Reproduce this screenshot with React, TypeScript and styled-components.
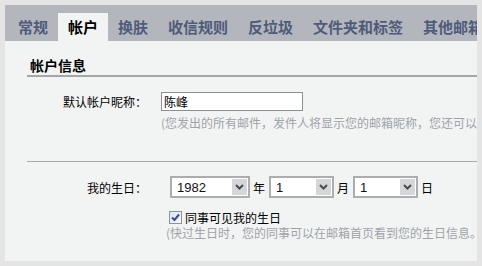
import { createGlobalStyle, styled } from "styled-components";

const GlobalStyle = createGlobalStyle`
  html, body {
    margin: 0;
    padding: 0;
    background: #e4e4e4;
  }
  * {
    box-sizing: border-box;
  }
`;

const Frame = styled.div`
  width: 482px;
  height: 266px;
  padding: 5px;
  background: #e4e4e4;
  font-family: "Noto Sans CJK SC", "Liberation Sans", sans-serif;
`;

const Panel = styled.div`
  height: 100%;
  background: #f2f4f3;
  overflow: hidden;
  display: flex;
  flex-direction: column;
`;

const TabBar = styled.div`
  height: 36px;
  flex: none;
  display: flex;
  align-items: flex-end;
  padding-left: 3px;
  background: #b3b6bc;
  white-space: nowrap;
`;

const Tab = styled.div<{ $active?: boolean }>`
  height: 28px;
  line-height: 28px;
  padding: 0 10px;
  font-size: 15px;
  font-weight: 700;
  color: ${({ $active }) => ($active ? "#000" : "#4f5b7a")};
  background: ${({ $active }) => ($active ? "#f2f4f3" : "transparent")};
  cursor: pointer;
`;

const Section = styled.div`
  margin-left: 22px;
`;

const SectionTitle = styled.div`
  margin-top: 14px;
  height: 22px;
  line-height: 20px;
  padding-left: 3px;
  font-size: 14px;
  font-weight: 700;
  color: #000;
  border-bottom: 2px solid #a6a6a6;
`;

const FormRow = styled.div<{ $top: number }>`
  display: grid;
  grid-template-columns: 120px 1fr;
  column-gap: 14px;
  align-items: center;
  margin-top: ${({ $top }) => $top}px;
  font-size: 12px;
`;

const Label = styled.div`
  text-align: right;
  color: #000;
  white-space: nowrap;
`;

const Field = styled.div<{ $indent?: number }>`
  padding-left: ${({ $indent }) => $indent ?? 0}px;
  white-space: nowrap;
`;

const TextInput = styled.input`
  width: 142px;
  height: 19px;
  padding: 0 2px;
  border: 1px solid #8a8f96;
  background: #fff;
  font-family: "Noto Sans CJK SC", sans-serif;
  font-size: 12px;
  color: #000;
  outline: none;
`;

const Hint = styled.div<{ $indent?: number; $top?: number }>`
  margin-left: ${({ $indent }) => 134 + ($indent ?? 0)}px;
  margin-top: ${({ $top }) => $top ?? 0}px;
  height: 16px;
  line-height: 16px;
  font-size: 12px;
  color: #9ea3aa;
  white-space: nowrap;
`;

const Divider = styled.div`
  margin-top: 30px;
  height: 1px;
  background: #a9a9a9;
`;

const DateLine = styled.div`
  display: flex;
  align-items: center;
  gap: 3px;
  color: #000;
`;

const SelectBox = styled.div<{ $w: number }>`
  width: ${({ $w }) => $w}px;
  height: 22px;
  display: flex;
  align-items: stretch;
  border: 2px solid #adadad;
  background: #fff;
  &:first-child {
    margin-left: 4px;
  }
`;

const NativeSelect = styled.select`
  flex: 1;
  min-width: 0;
  appearance: none;
  border: none;
  outline: none;
  background: transparent;
  padding: 0 0 0 5px;
  font-family: "Liberation Sans", Arial, sans-serif;
  font-size: 13px;
  color: #111;
`;

const Arrow = styled.span`
  width: 15px;
  margin: 1px 1px 1px 0;
  display: flex;
  align-items: center;
  justify-content: center;
  background: #d5d6da;
  pointer-events: none;
`;

const Unit = styled.span`
  font-size: 12px;
  margin-right: 1px;
`;

const CheckRow = styled.label`
  display: flex;
  align-items: center;
  gap: 3px;
  margin-top: 11px;
  margin-left: 142px;
  height: 16px;
  font-size: 12px;
  color: #000;
  white-space: nowrap;
  cursor: pointer;
`;

const HiddenCheck = styled.input`
  position: absolute;
  opacity: 0;
  width: 0;
  height: 0;
`;

const CheckBoxFace = styled.span`
  width: 13px;
  height: 13px;
  display: flex;
  align-items: center;
  justify-content: center;
  border: 1px solid #8f949c;
  background: linear-gradient(135deg, #dfe6f0 0%, #f6f8fb 100%);
`;

const Chevron = () => (
  <svg width="9" height="6" viewBox="0 0 9 6">
    <path d="M1 1 L4.5 4.5 L8 1" fill="none" stroke="#4a4a4a" strokeWidth="2" />
  </svg>
);

const Select = ({ w, value, options }: { w: number; value: string; options: string[] }) => (
  <SelectBox $w={w}>
    <NativeSelect defaultValue={value}>
      {options.map((o) => (
        <option key={o}>{o}</option>
      ))}
    </NativeSelect>
    <Arrow>
      <Chevron />
    </Arrow>
  </SelectBox>
);

const range = (a: number, b: number) =>
  Array.from({ length: b - a + 1 }, (_, i) => String(a + i));

const tabs = ["常规", "帐户", "换肤", "收信规则", "反垃圾", "文件夹和标签", "其他邮箱"];

export default function App() {
  return (
    <>
      <GlobalStyle />
      <Frame>
        <Panel>
          <TabBar>
            {tabs.map((t) => (
              <Tab key={t} $active={t === "帐户"}>
                {t}
              </Tab>
            ))}
          </TabBar>
          <Section>
            <SectionTitle>帐户信息</SectionTitle>
            <FormRow $top={15}>
              <Label>默认帐户昵称：</Label>
              <Field>
                <TextInput defaultValue="陈峰" />
              </Field>
            </FormRow>
            <Hint $top={4}>(您发出的所有邮件，发件人将显示您的邮箱昵称，您还可以</Hint>
            <Divider />
            <FormRow $top={14}>
              <Label>我的生日：</Label>
              <Field $indent={5}>
                <DateLine>
                  <Select w={80} value="1982" options={range(1900, 2010)} />
                  <Unit>年</Unit>
                  <Select w={65} value="1" options={range(1, 12)} />
                  <Unit>月</Unit>
                  <Select w={65} value="1" options={range(1, 31)} />
                  <Unit>日</Unit>
                </DateLine>
              </Field>
            </FormRow>
            <CheckRow>
              <HiddenCheck type="checkbox" defaultChecked />
              <CheckBoxFace>
                <svg width="9" height="9" viewBox="0 0 9 9">
                  <path d="M1 4.5 L3.5 7 L8 1.5" fill="none" stroke="#2d4f9a" strokeWidth="2" />
                </svg>
              </CheckBoxFace>
              同事可见我的生日
            </CheckRow>
            <Hint $indent={5}>(快过生日时，您的同事可以在邮箱首页看到您的生日信息。</Hint>
          </Section>
        </Panel>
      </Frame>
    </>
  );
}
